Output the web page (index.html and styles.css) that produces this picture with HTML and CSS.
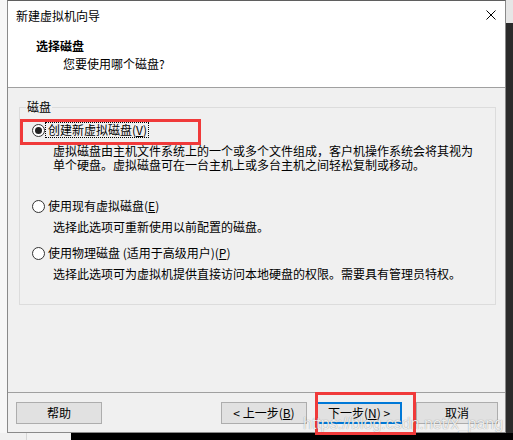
FILE: index.html
```html
<!DOCTYPE html>
<html lang="zh-CN">
<head>
<meta charset="utf-8">
<title>新建虚拟机向导</title>
<link rel="stylesheet" href="styles.css">
</head>
<body>
<div class="screen">
  <div class="side-left"></div>
  <div class="dialog">
    <div class="titlebar">
      <span class="title">新建虚拟机向导</span>
      <svg class="close" width="10" height="10" viewBox="0 0 10 10"><path d="M0.5 0.5 L9.5 9.5 M9.5 0.5 L0.5 9.5" stroke="#000" stroke-width="1" fill="none"/></svg>
    </div>
    <div class="header">
      <div class="h-title">选择磁盘</div>
      <div class="h-sub">您要使用哪个磁盘?</div>
    </div>
    <div class="body">
      <fieldset class="group">
        <legend>磁盘</legend>
        <div class="option first"><span class="radio checked"></span><span class="label focus">创建新虚拟磁盘(<u>V</u>)</span></div>
        <p class="desc">虚拟磁盘由主机文件系统上的一个或多个文件组成，客户机操作系统会将其视为<br>单个硬盘。虚拟磁盘可在一台主机上或多台主机之间轻松复制或移动。</p>
        <div class="option second"><span class="radio"></span><span class="label">使用现有虚拟磁盘(<u>E</u>)</span></div>
        <p class="desc">选择此选项可重新使用以前配置的磁盘。</p>
        <div class="option third"><span class="radio"></span><span class="label">使用物理磁盘 (适用于高级用户)(<u>P</u>)</span></div>
        <p class="desc">选择此选项可为虚拟机提供直接访问本地硬盘的权限。需要具有管理员特权。</p>
      </fieldset>
    </div>
    <div class="buttons">
      <button class="btn help">帮助</button>
      <button class="btn back">&lt; 上一步(<u>B</u>)</button>
      <button class="btn next">下一步(<u>N</u>) &gt;</button>
      <button class="btn cancel">取消</button>
    </div>
  </div>
  <div class="side-right"><div class="sr-top"></div></div>
  <div class="bottom-strip"><div class="bs-left"></div><div class="bs-mid"></div></div>
  <div class="mark mark-radio"></div>
  <div class="mark mark-next"></div>
  <div class="watermark">https://blog.csdn.net/x_pang</div>
</div>
</body>
</html>
```

FILE: styles.css
```css
* { box-sizing: border-box; }
html, body { margin: 0; padding: 0; }
body {
  width: 513px;
  height: 440px;
  overflow: hidden;
  background: #000;
  font-family: "Noto Sans CJK SC", "Microsoft YaHei", sans-serif;
  font-size: 12px;
  color: #000;
}
.screen {
  position: relative;
  display: grid;
  grid-template-columns: 7px 499px 7px;
  grid-template-rows: 433px 7px;
  width: 513px;
  height: 440px;
}
.side-left { background: #f7f7f7; border-right: 0; }
.side-right { background: #2b2b2b; }
.sr-top { height: 23px; background: #e6e6e6; }
.bottom-strip {
  grid-column: 1 / 4;
  display: flex;
  background: #000;
}
.bs-left { width: 27px; background: #f0f0f0; border-right: 1px solid #d6d6d6; }
.bs-mid { width: 44px; background: #f2f2f2; }

.dialog {
  display: flex;
  flex-direction: column;
  border: 1px solid #8a8a8a;
  border-top-color: #5f5f5f;
  background: #f0f0f0;
}
.titlebar {
  height: 29px;
  display: flex;
  align-items: center;
  justify-content: space-between;
  padding: 0 8px 0 8px;
  background: #fff;
  line-height: 29px;
}
.title { font-size: 12px; }
.close { margin-right: 1px; margin-top: -1px; }

.header {
  height: 58px;
  background: #fff;
  border-bottom: 1px solid #a0a0a0;
  padding-top: 8px;
}
.h-title {
  font-weight: bold;
  line-height: 16px;
  padding-left: 28px;
}
.h-sub {
  line-height: 16px;
  margin-top: 2px;
  padding-left: 55px;
}

.body {
  height: 305px;
  border-bottom: 1px solid #a0a0a0;
  padding-top: 12px;
}
.group {
  margin: 0 0 0 11px;
  padding: 0;
  width: 477px;
  height: 205px;
  border: 1px solid #dcdcdc;
  min-width: 0;
}
.group legend {
  margin-left: 6px;
  padding: 0 1px;
  line-height: 14px;
}
.option {
  display: flex;
  align-items: center;
  line-height: 14px;
  white-space: nowrap;
}
.option.first { margin-top: 9px; }
.option.second { margin-top: 27px; }
.option.third { margin-top: 12px; }
.radio {
  width: 13px;
  height: 13px;
  margin-left: 12px;
  border: 1px solid #333;
  border-radius: 50%;
  background: #fff;
  display: flex;
  align-items: center;
  justify-content: center;
  flex: none;
}
.radio.checked::after {
  content: "";
  width: 7px;
  height: 7px;
  border-radius: 50%;
  background: #222;
}
.label {
  margin-left: 1px;
  padding: 0 1px 0 2px;
}
.label.focus { outline: 1px dotted #000; outline-offset: 0; }
.label u, .btn u { text-decoration: underline; text-underline-offset: 1px; }
.desc {
  margin: 7px 0 0 33px;
  line-height: 14px;
  white-space: nowrap;
}

.buttons {
  height: 39px;
  display: flex;
  align-items: flex-start;
  padding: 9px 0 0 8px;
}
.btn {
  height: 22px;
  width: 86px;
  padding: 0;
  border: 1px solid #adadad;
  background: #e1e1e1;
  font-family: "Noto Sans CJK SC", "Microsoft YaHei", sans-serif;
  font-size: 12px;
  line-height: 18px;
  color: #000;
}
.back { margin-left: 119px; }
.next { margin-left: 9px; border: 2px solid #0078d7; }
.cancel { margin-left: 14px; width: 82px; }

.mark {
  position: absolute;
  border: 3px solid #f03a3a;
  pointer-events: none;
}
.mark-radio { left: 20px; top: 119px; width: 181px; height: 26px; }
.mark-next { left: 315px; top: 392px; width: 101px; height: 43px; }

.watermark {
  position: absolute;
  left: 303px;
  top: 415px;
  font-family: "Liberation Sans", Arial, sans-serif;
  font-size: 16px;
  line-height: 18px;
  color: rgba(255, 255, 255, 0.85);
  text-shadow: 0 0 1px rgba(0, 0, 0, 0.45);
  white-space: nowrap;
}
```
